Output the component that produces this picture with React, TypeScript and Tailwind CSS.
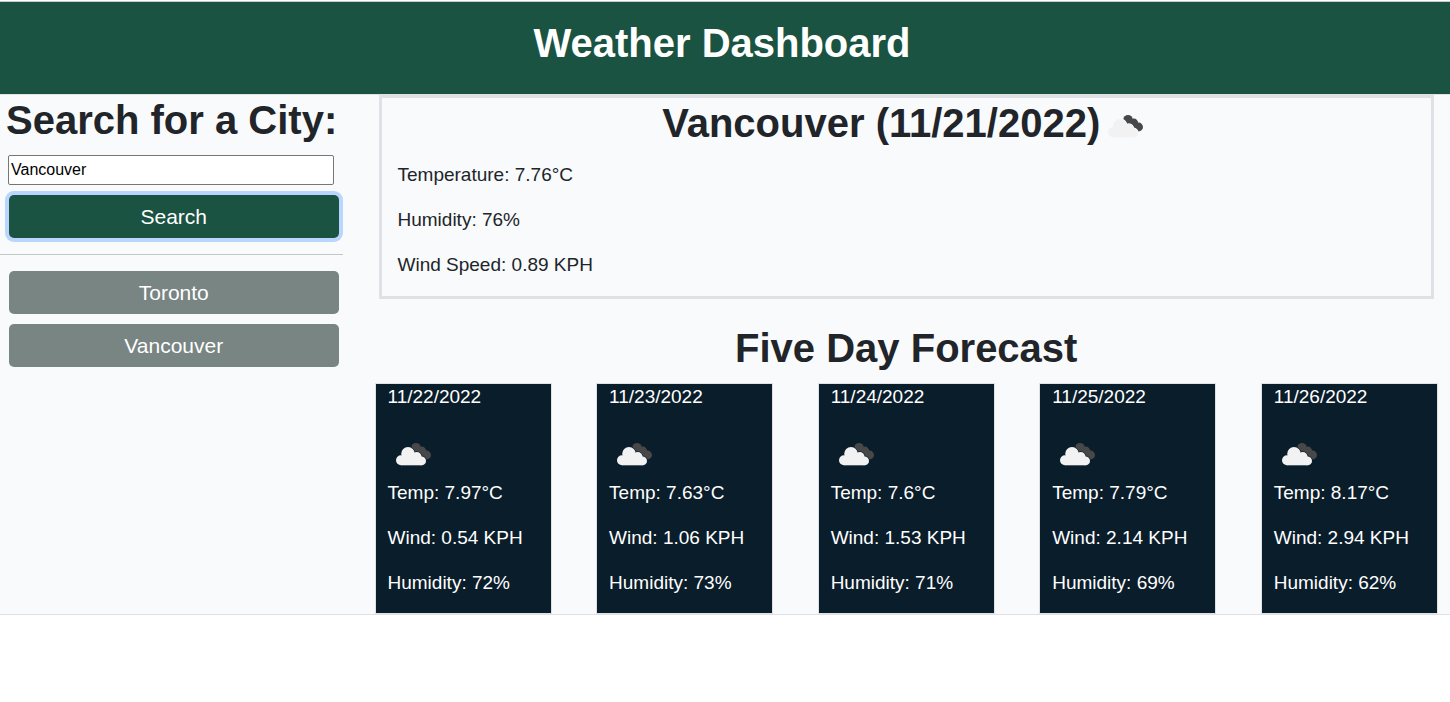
import { useId, useState } from "react";

interface Forecast {
  date: string;
  temp: string;
  wind: string;
  humidity: string;
}

const forecasts: Forecast[] = [
  { date: "11/22/2022", temp: "7.97", wind: "0.54", humidity: "72" },
  { date: "11/23/2022", temp: "7.63", wind: "1.06", humidity: "73" },
  { date: "11/24/2022", temp: "7.6", wind: "1.53", humidity: "71" },
  { date: "11/25/2022", temp: "7.79", wind: "2.14", humidity: "69" },
  { date: "11/26/2022", temp: "8.17", wind: "2.94", humidity: "62" },
];

const history = ["Toronto", "Vancouver"];

function FrontCloud() {
  return (
    <>
      <circle cx="13" cy="31.300" r="5" />
      <circle cx="20" cy="24.800" r="6.800" />
      <circle cx="28.800" cy="27.800" r="4.800" />
      <circle cx="33.600" cy="31.900" r="4.400" />
      <rect x="13" y="27.800" width="20.600" height="8.500" />
    </>
  );
}

function BrokenClouds() {
  const maskId = useId();
  return (
    <svg viewBox="0 0 50 50" className="inline-block size-[50px] align-middle" aria-hidden="true">
      <mask id={maskId} maskUnits="userSpaceOnUse" x="0" y="0" width="50" height="50">
        <rect width="50" height="50" fill="white" />
        <g fill="black" stroke="black" strokeWidth="1.400">
          <FrontCloud />
        </g>
      </mask>
      <g fill="#484848" mask={`url(#${maskId})`}>
        <circle cx="28" cy="18.600" r="4.700" />
        <circle cx="33.800" cy="22" r="4.400" />
        <circle cx="38.600" cy="26" r="4.400" />
      </g>
      <g fill="#f2f2f2">
        <FrontCloud />
      </g>
    </svg>
  );
}

function SearchPanel() {
  const [city, setCity] = useState("Vancouver");
  return (
    <aside className="w-1/4 shrink-0 pt-px pr-5">
      <form onSubmit={(e) => e.preventDefault()}>
        <h2 className="pl-1.5 text-[40px] leading-[48px] font-bold whitespace-nowrap">
          <label htmlFor="city">Search for a City:</label>
        </h2>
        <div className="mt-[11px] pr-2 pl-2">
          <input
            id="city"
            type="text"
            value={city}
            onChange={(e) => setCity(e.target.value)}
            className="block h-[30px] w-[calc(100%-1px)] rounded-[2px] border border-[#767676] bg-white px-0.5 text-base text-black outline-none"
          />
        </div>
        <button
          type="submit"
          className="mt-2.5 mr-1 ml-[9px] block h-[43px] w-[calc(100%-13px)] rounded-[5px] bg-[#1a5341] text-[21px] text-white ring-4 ring-[#bad6fc]"
        >
          Search
        </button>
      </form>
      <hr className="my-4 border-[#c4c6c9]" />
      <div className="flex flex-col gap-2.5 pr-1 pl-[9px]">
        {history.map((name) => (
          <button
            key={name}
            type="button"
            onClick={() => setCity(name)}
            className="h-[43px] rounded-[5px] bg-[#788583] text-[21px] text-white"
          >
            {name}
          </button>
        ))}
      </div>
    </aside>
  );
}

function CurrentWeather() {
  return (
    <article className="mx-4 border-[3px] border-[#dfe1e7] px-4 pb-[17px]">
      <h2 className="text-center text-[40px] leading-[50px] font-bold">
        Vancouver (11/21/2022)
        <BrokenClouds />
      </h2>
      <div className="mt-[9px] flex flex-col gap-4 text-[19px] leading-[29px]">
        <p>Temperature: 7.76°C</p>
        <p>Humidity: 76%</p>
        <p>Wind Speed: 0.89 KPH</p>
      </div>
    </article>
  );
}

function ForecastCard({ date, temp, wind, humidity }: Forecast) {
  return (
    <li className="w-1/6 border border-[#dfe1e7] bg-[#0a1d2b] px-3 pb-4 text-[19px] leading-[28px] text-white">
      <h3 className="leading-[26px]">{date}</h3>
      <div className="mt-[19px] flex">
        <BrokenClouds />
      </div>
      <div className="flex flex-col gap-[17px]">
        <p>Temp: {temp}°C</p>
        <p>Wind: {wind} KPH</p>
        <p>Humidity: {humidity}%</p>
      </div>
    </li>
  );
}

export default function App() {
  return (
    <div className="bg-white pt-px font-['Liberation_Sans',Arial,sans-serif] text-[#212529]">
      <header className="border-t border-[#c8cccb] bg-[#1a5341] pt-[17px] pb-[27px] pr-1.5 text-center text-white">
        <h1 className="text-[40px] leading-[48px] font-bold">Weather Dashboard</h1>
      </header>
      <div className="flex border-y border-[#dfe1e7] bg-[#f8fafc]">
        <SearchPanel />
        <main className="min-w-0 flex-1">
          <CurrentWeather />
          <section className="mt-[25px]">
            <h2 className="text-center text-[40px] leading-[48px] font-bold">Five Day Forecast</h2>
            <ul className="mt-[11px] flex justify-between px-3">
              {forecasts.map((day) => (
                <ForecastCard key={day.date} {...day} />
              ))}
            </ul>
          </section>
        </main>
      </div>
    </div>
  );
}
